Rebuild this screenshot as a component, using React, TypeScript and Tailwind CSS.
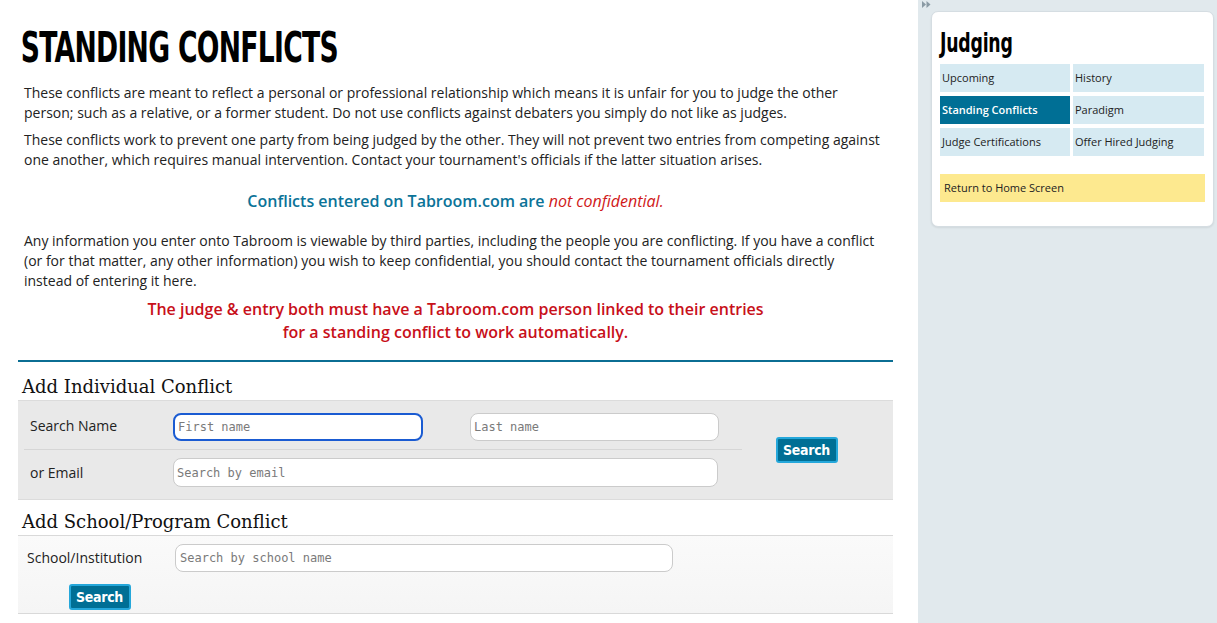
import React from "react";

const cond = { fontFamily: '"DejaVu Sans Condensed", "Liberation Sans Narrow", sans-serif' };
const mono = { fontFamily: '"DejaVu Sans Mono", monospace' };

function SearchBtn() {
  return (
    <button
      className="h-[26px] w-[62px] rounded-[3px] border-2 border-[#25a7da] bg-[#006f95] text-[14px] font-bold leading-none tracking-[-0.3px] text-white"
      style={cond}
    >
      Search
    </button>
  );
}

export default function App() {
  const menu = [
    ["Upcoming", false],
    ["History", false],
    ["Standing Conflicts", true],
    ["Paradigm", false],
    ["Judge Certifications", false],
    ["Offer Hired Judging", false],
  ] as const;

  return (
    <div
      className="flex h-[623px] w-[1217px] overflow-hidden bg-white text-[#222]"
      style={{ fontFamily: '"Open Sans", sans-serif' }}
    >
      {/* main */}
      <div className="flex w-[918px] shrink-0 flex-col pl-[18px] pr-[25px]">
        <h1
          className="mt-[26px] origin-left scale-x-[0.705] whitespace-nowrap pl-[4px] text-[42px] font-bold leading-[44px] tracking-[-1px] text-black"
          style={cond}
        >
          STANDING CONFLICTS
        </h1>
        <div className="mt-[13px] w-[866px] pl-[6px] text-[14px] leading-[20px]">
          <p>
            These conflicts are meant to reflect a personal or professional relationship which means it is unfair for you to judge the other person; such as a relative, or a former student. Do not use conflicts against debaters you simply do not like as judges.
          </p>
          <p className="mt-[7px]">
            These conflicts work to prevent one party from being judged by the other. They will not prevent two entries from competing against one another, which requires manual intervention. Contact your tournament's officials if the latter situation arises.
          </p>
        </div>
        <p className="mt-[20px] text-center text-[16px] font-semibold leading-[22px] text-[#0b7398]">
          Conflicts entered on Tabroom.com are{" "}
          <span className="font-normal italic text-[#d01818]">not confidential.</span>
        </p>
        <p className="mt-[19px] w-[866px] pl-[6px] text-[14px] leading-[20px]">
          Any information you enter onto Tabroom is viewable by third parties, including the people you are conflicting. If you have a conflict (or for that matter, any other information) you wish to keep confidential, you should contact the tournament officials directly instead of entering it here.
        </p>
        <p className="mt-[7px] text-center text-[16px] font-semibold leading-[23px] text-[#c8101a]">
          The judge &amp; entry both must have a Tabroom.com person linked to their entries
          <br />
          for a standing conflict to work automatically.
        </p>
        <div className="mt-[16px] h-[2px] bg-[#0b6e93]" />

        <h2
          className="mt-[14px] pl-[4px] text-[18px] leading-[22px] text-[#111]"
          style={{ fontFamily: '"DejaVu Serif", serif' }}
        >
          Add Individual Conflict
        </h2>
        <div className="mt-[2px] grid grid-cols-[149px_575px_1fr] border-y border-[#dcdcdc] bg-[#e9e9e9] text-[14px]">
          <div className="ml-[6px] flex h-[49px] items-center border-b border-[#d6d6d6] pl-[6px]">Search Name</div>
          <div className="flex h-[49px] items-center gap-[47px] border-b border-[#d6d6d6] pl-[6px] pt-[3px]">
            <input
              placeholder="First name"
              className="h-[28px] w-[250px] rounded-[8px] border-2 border-[#1a5bd2] bg-white px-[3px] text-[12px] outline-none placeholder:text-[#7a7a7a]"
              style={mono}
            />
            <input
              placeholder="Last name"
              className="h-[28px] w-[249px] rounded-[8px] border border-[#cbcbcb] bg-white px-[3px] text-[12px] outline-none placeholder:text-[#7a7a7a]"
              style={mono}
            />
          </div>
          <div className="row-span-2 flex items-center justify-center pr-[22px]">
            <SearchBtn />
          </div>
          <div className="ml-[6px] flex h-[49px] items-center pl-[6px] pb-[4px]">or Email</div>
          <div className="flex h-[49px] items-center pl-[6px] pb-[4px]">
            <input
              placeholder="Search by email"
              className="h-[29px] w-[545px] rounded-[8px] border border-[#cbcbcb] bg-white px-[3px] text-[12px] outline-none placeholder:text-[#7a7a7a]"
              style={mono}
            />
          </div>
        </div>

        <h2
          className="mt-[11px] pl-[4px] text-[18px] leading-[22px] text-[#111]"
          style={{ fontFamily: '"DejaVu Serif", serif' }}
        >
          Add School/Program Conflict
        </h2>
        <div className="mt-[2px] grid grid-cols-[157px_1fr] border-y border-[#d9d9d9] bg-gradient-to-b from-[#fafafa] to-[#f5f5f5] text-[14px]">
          <div className="flex h-[43px] items-center pl-[9px]">School/Institution</div>
          <div className="flex h-[43px] items-center">
            <input
              placeholder="Search by school name"
              className="h-[28px] w-[498px] rounded-[8px] border border-[#cbcbcb] bg-white px-[4px] text-[12px] outline-none placeholder:text-[#7a7a7a]"
              style={mono}
            />
          </div>
          <div className="flex h-[34px] items-start justify-center pl-[6px] pt-[5px]">
            <SearchBtn />
          </div>
          <div />
        </div>
      </div>

      {/* sidebar */}
      <div className="relative flex-1 bg-[#e1e9ed] pl-[13px] pr-[4px] pt-[11px]">
        <svg className="absolute left-[4px] top-[1px]" width="9" height="7" viewBox="0 0 9 7">
          <polygon points="0,0 4,3.5 0,7" fill="#8a9aa4" />
          <polygon points="4.5,0 8.5,3.5 4.5,7" fill="#8a9aa4" />
        </svg>
        <div className="rounded-[7px] border border-[#d5dde2] bg-white px-[8px] pb-[24px] pt-[16px] shadow-[0_1px_2px_rgba(0,0,0,0.08)]">
          <h3
            className="origin-left scale-x-[0.74] text-[26px] font-bold leading-[30px] tracking-[-0.3px] text-black"
            style={cond}
          >
            Judging
          </h3>
          <div className="mt-[6px] grid grid-cols-[130px_131px] gap-x-[3px] gap-y-[4px] text-[11px]">
            {menu.map(([label, active]) => (
              <div
                key={label}
                className={
                  active
                    ? "flex h-[28px] items-center bg-[#006f95] pl-[2px] font-semibold text-white"
                    : "flex h-[28px] items-center bg-[#d6eaf2] pl-[2px] text-[#222]"
                }
              >
                {label}
              </div>
            ))}
          </div>
          <div className="mt-[18px] flex h-[28px] w-[265px] items-center bg-[#fde98f] pl-[4px] text-[11px] text-[#222]">
            Return to Home Screen
          </div>
        </div>
      </div>
    </div>
  );
}
